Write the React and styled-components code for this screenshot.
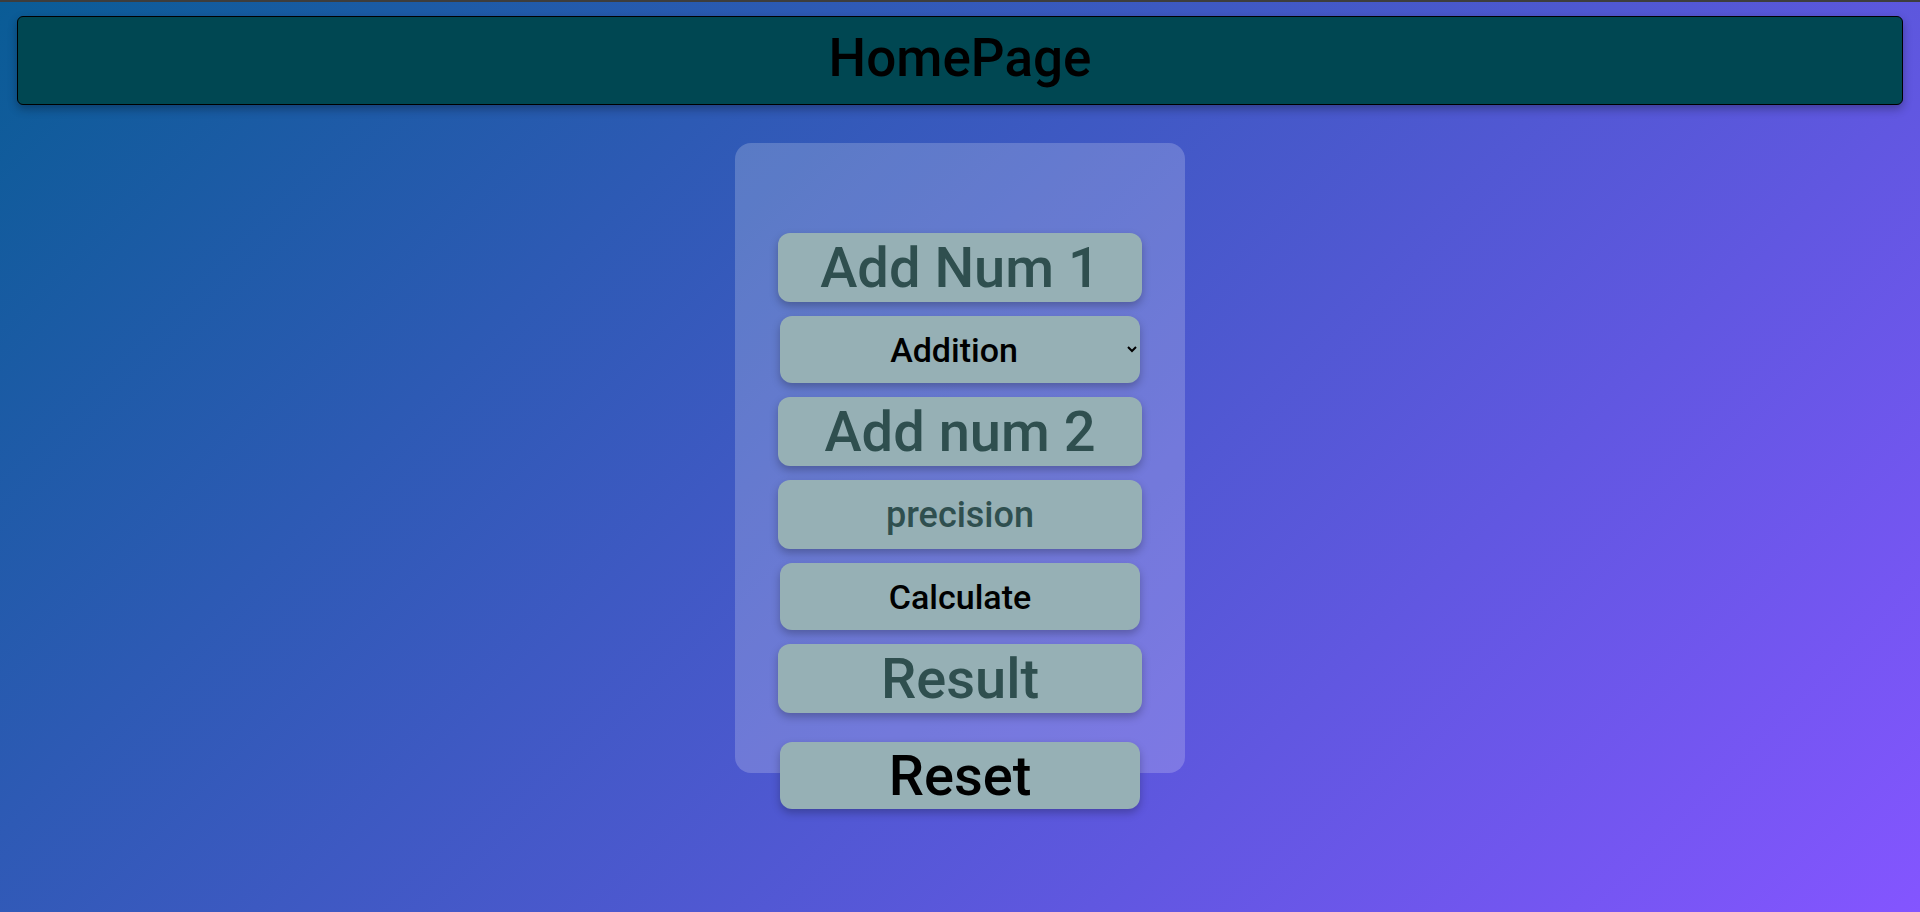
import styled, { createGlobalStyle } from "styled-components";
import { useState } from "react";

const GlobalStyle = createGlobalStyle`
  * {
    box-sizing: border-box;
  }
  body {
    margin: 0;
    font-family: Roboto, "Liberation Sans", sans-serif;
  }
`;

const App = () => {
  const [num1, setNum1] = useState("");
  const [num2, setNum2] = useState("");
  const [op, setOp] = useState("add");
  const [precision, setPrecision] = useState("");
  const [result, setResult] = useState("");

  const calculate = () => {
    const a = parseFloat(num1);
    const b = parseFloat(num2);
    if (isNaN(a) || isNaN(b)) return;
    let r = 0;
    if (op === "add") r = a + b;
    if (op === "sub") r = a - b;
    if (op === "mul") r = a * b;
    if (op === "div") r = a / b;
    const p = parseInt(precision);
    setResult(isNaN(p) ? String(r) : r.toFixed(p));
  };

  const reset = () => {
    setNum1("");
    setNum2("");
    setOp("add");
    setPrecision("");
    setResult("");
  };

  return (
    <Page>
      <GlobalStyle />
      <Header>HomePage</Header>
      <Card>
        <Field
          $size="56px"
          placeholder="Add Num 1"
          value={num1}
          onChange={(e) => setNum1(e.target.value)}
        />
        <Select value={op} onChange={(e) => setOp(e.target.value)}>
          <option value="add">Addition</option>
          <option value="sub">Subtraction</option>
          <option value="mul">Multiplication</option>
          <option value="div">Division</option>
        </Select>
        <Field
          $size="56px"
          placeholder="Add num 2"
          value={num2}
          onChange={(e) => setNum2(e.target.value)}
        />
        <Field
          $size="36px"
          placeholder="precision"
          value={precision}
          onChange={(e) => setPrecision(e.target.value)}
        />
        <Button onClick={calculate}>Calculate</Button>
        <Field $size="56px" placeholder="Result" value={result} readOnly />
        <ResetButton onClick={reset}>Reset</ResetButton>
      </Card>
    </Page>
  );
};

const Page = styled.div`
  min-height: 100vh;
  border-top: 2px solid #3d3d3d;
  padding: 14px 17px;
  background: linear-gradient(135deg, #0a5c96 0%, #8455ff 100%);
`;

const Header = styled.h1`
  margin: 0;
  height: 89px;
  display: flex;
  align-items: center;
  justify-content: center;
  background: #004752;
  border: 1px solid #000;
  border-radius: 6px;
  box-shadow: 0 4px 10px rgba(0, 0, 0, 0.3);
  color: #000;
  font-size: 53px;
  font-weight: 500;
  padding-bottom: 6px;
`;

const Card = styled.div`
  width: 450px;
  height: 630px;
  margin: 38px auto 0;
  padding-top: 90px;
  border-radius: 16px;
  background: rgba(255, 255, 255, 0.2);
  display: flex;
  flex-direction: column;
  align-items: center;
  gap: 14px;
`;

const Field = styled.input`
  flex-shrink: 0;
  width: 364px;
  height: 69px;
  border: none;
  border-radius: 12px;
  background: #96b0b5;
  color: #2f4f4f;
  font-family: Roboto, "Liberation Sans", sans-serif;
  font-size: ${(p) => p.$size};
  font-weight: 500;
  text-align: center;
  outline: none;
  box-shadow: 0 4px 8px rgba(0, 0, 0, 0.25);

  &::placeholder {
    color: #2f4f4f;
    opacity: 1;
  }
`;

const Select = styled.select`
  flex-shrink: 0;
  width: 360px;
  height: 67px;
  border: none;
  border-radius: 12px;
  background: #96b0b5;
  color: #000;
  font-family: Roboto, "Liberation Sans", sans-serif;
  font-size: 34px;
  font-weight: 500;
  text-align: center;
  text-align-last: center;
  box-shadow: 0 4px 8px rgba(0, 0, 0, 0.25);
  outline: none;
`;

const Button = styled.button`
  flex-shrink: 0;
  width: 360px;
  height: 67px;
  border: none;
  border-radius: 12px;
  background: #96b0b5;
  color: #000;
  font-family: Roboto, "Liberation Sans", sans-serif;
  font-size: 34px;
  font-weight: 500;
  box-shadow: 0 4px 8px rgba(0, 0, 0, 0.25);
  cursor: pointer;
`;

const ResetButton = styled(Button)`
  margin-top: 15px;
  font-size: 56px;
`;

export default App;
